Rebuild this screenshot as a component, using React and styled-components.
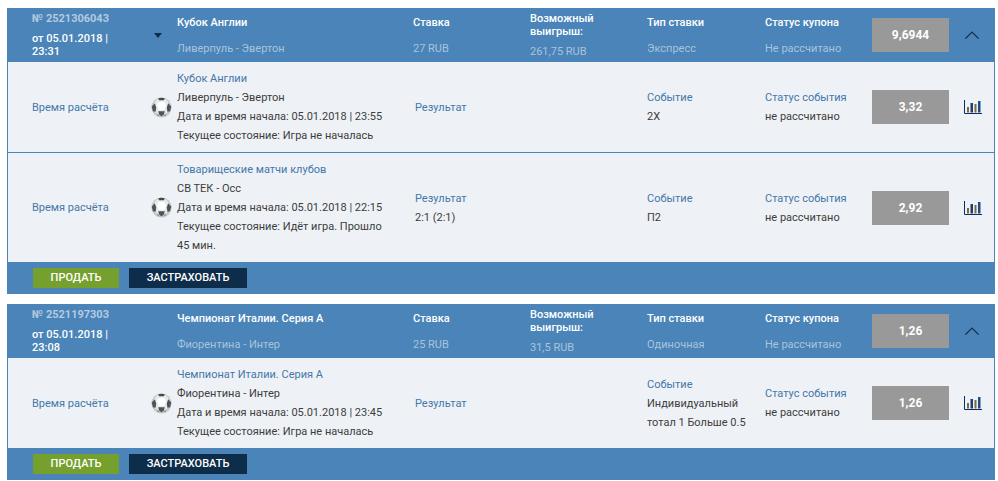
import React from "react";
import styled, { createGlobalStyle } from "styled-components";

const Global = createGlobalStyle`
  html, body { margin: 0; padding: 0; background: #fff; }
  body { font-family: Roboto, "Liberation Sans", sans-serif; font-size: 11px; color: #3d3d3d; }
`;

const Page = styled.div`
  padding: 8px 3px 0 7px;
  display: flex;
  flex-direction: column;
  gap: 10px;
`;

const Card = styled.section`
  background: #4a84b8;
  border: solid #4a84b8;
  border-width: 0 1px;
`;

const columns = "24px 145px 236px 117px 117px 118px 107px 77px 45px";

const Header = styled.header`
  display: grid;
  grid-template-columns: ${columns};
  height: 54px;
  align-items: center;
`;

const Row = styled.div`
  display: grid;
  grid-template-columns: ${columns};
  align-items: center;
  padding: 7px 0;
  background: #eef2f6;
  & + & { border-top: 1px solid #4a84b8; }
`;

const Stack = styled.div`
  display: flex;
  flex-direction: column;
  gap: ${(p) => p.$gap ?? 13}px;
  line-height: 13px;
`;

const Title = styled.div`
  color: #fff;
  font-weight: 500;
`;

const Sub = styled.div`
  color: #a9c3dc;
`;

const NumberCell = styled.div`
  grid-column: 2;
  display: flex;
  align-items: center;
`;

const NumberText = styled(Stack)`
  width: 118px;
`;

const CouponNo = styled.div`
  color: #b4cae0;
  font-weight: 700;
`;

const CouponDate = styled.div`
  max-width: 90px;
  color: #fff;
  font-weight: 500;
`;

const Caret = styled.span`
  width: 0;
  height: 0;
  margin: 1px 0 0 4px;
  border: solid transparent;
  border-width: 5px 4px 0;
  border-top-color: #0d2d4a;
`;

const Odds = styled.div`
  height: 34px;
  display: flex;
  align-items: center;
  justify-content: center;
  background: #999;
  color: #fff;
  font-size: 12px;
  font-weight: 700;
`;

const Toggle = styled.button`
  justify-self: center;
  width: 14px;
  height: 8px;
  display: flex;
  padding: 0;
  border: 0;
  background: none;
`;

const Lines = styled.div`
  line-height: 19px;
`;

const EventLines = styled(Lines)`
  padding-right: 30px;
`;

const ResultLines = styled(Lines)`
  padding-left: 2px;
`;

const Link = styled.div`
  color: #4577a8;
`;

const TimeCell = styled(Link)`
  grid-column: 2;
  display: flex;
  align-items: center;
  justify-content: space-between;
  padding-right: 5px;
`;

const ChartCell = styled.div`
  justify-self: center;
  display: flex;
  padding-left: 2px;
`;

const Footer = styled.footer`
  display: flex;
  gap: 10px;
  padding: 6px 25px;
`;

const Action = styled.button`
  height: 20px;
  width: ${(p) => p.$w}px;
  padding: 0;
  border: 0;
  background: ${(p) => p.$bg};
  color: #fff;
  font: 500 11px/20px Roboto, sans-serif;
  text-transform: uppercase;
`;

const Ball = () => (
  <svg width="21" height="21" viewBox="0 0 22 22" aria-hidden="true">
    <circle cx="11" cy="11" r="10.6" fill="#c3ccca" />
    <circle cx="11" cy="10" r="8.6" fill="#e6eaea" />
    <path d="M7.5 1.4 Q11 0.4 14.5 1.4 L13.5 3.4 L8.5 3.4Z" fill="#414b4a" />
    <path d="M0.8 10 L4 6.5 L5.5 11 L4.8 15.5 L2 15Z" fill="#4b5554" />
    <path d="M21.2 10 L18 6.5 L16.5 11 L17.2 15.5 L20 15Z" fill="#4b5554" />
    <path d="M7.5 15 L14.5 15 L13.5 18 L11 20.5 L8.5 18Z" fill="#4b5554" />
    <path d="M7 17.5 L9 20.5 L6.5 19.5Z M15 17.5 L13 20.5 L15.5 19.5Z" fill="#7d8786" />
    <path d="M8 5 L14 5 L16 9.5 L13.5 13.5 L8.5 13.5 L6 9.5Z" fill="#ffffff" />
  </svg>
);

const Chart = () => (
  <svg width="18" height="14" viewBox="0 0 18 14" aria-hidden="true">
    <path d="M0.5 0 V13.5 H18" fill="none" stroke="#0d2d6a" strokeWidth="1" />
    <rect x="3" y="7" width="2" height="5.5" fill="#7d6a45" />
    <rect x="6.5" y="3" width="2.5" height="9.5" fill="#1d3f6e" />
    <rect x="10.5" y="4" width="2" height="8.5" fill="#7d6a45" />
    <rect x="14" y="1" width="2.5" height="11.5" fill="#1d4f86" />
  </svg>
);

const Chevron = () => (
  <svg width="14" height="8" viewBox="0 0 14 8" aria-hidden="true">
    <path d="M0.5 7.5 L7 1 L13.5 7.5" fill="none" stroke="#17314c" strokeWidth="1.2" />
  </svg>
);

const coupons = [
  {
    no: "№ 2521306043",
    date: "от 05.01.2018 | 23:31",
    caret: true,
    title: "Кубок Англии",
    match: "Ливерпуль - Эвертон",
    stake: "27 RUB",
    win: "261,75 RUB",
    type: "Экспресс",
    odds: "9,6944",
    events: [
      {
        league: "Кубок Англии",
        match: "Ливерпуль - Эвертон",
        start: "05.01.2018 | 23:55",
        state: "Игра не началась",
        score: null,
        bet: ["2Х"],
        odds: "3,32",
      },
      {
        league: "Товарищеские матчи клубов",
        match: "СВ ТЕК - Осс",
        start: "05.01.2018 | 22:15",
        state: "Идёт игра. Прошло 45 мин.",
        score: "2:1 (2:1)",
        bet: ["П2"],
        odds: "2,92",
      },
    ],
  },
  {
    no: "№ 2521197303",
    date: "от 05.01.2018 | 23:08",
    caret: false,
    title: "Чемпионат Италии. Серия А",
    match: "Фиорентина - Интер",
    stake: "25 RUB",
    win: "31,5 RUB",
    type: "Одиночная",
    odds: "1,26",
    events: [
      {
        league: "Чемпионат Италии. Серия А",
        match: "Фиорентина - Интер",
        start: "05.01.2018 | 23:45",
        state: "Игра не началась",
        score: null,
        bet: ["Индивидуальный", "тотал 1 Больше 0.5"],
        odds: "1,26",
      },
    ],
  },
];

const Info = ({ title, value, gap }) => (
  <Stack $gap={gap}>
    <Title>{title}</Title>
    <Sub>{value}</Sub>
  </Stack>
);

export default function App() {
  return (
    <>
      <Global />
      <Page>
        {coupons.map((c) => (
          <Card key={c.no}>
            <Header>
              <NumberCell>
                <NumberText $gap={7}>
                  <CouponNo>{c.no}</CouponNo>
                  <CouponDate>{c.date}</CouponDate>
                </NumberText>
                {c.caret && <Caret />}
              </NumberCell>
              <Info title={c.title} value={c.match} />
              <Info title="Ставка" value={c.stake} />
              <Info title="Возможный выигрыш:" value={c.win} gap={7} />
              <Info title="Тип ставки" value={c.type} />
              <Info title="Статус купона" value="Не рассчитано" />
              <Odds>{c.odds}</Odds>
              <Toggle aria-label="Свернуть">
                <Chevron />
              </Toggle>
            </Header>
            {c.events.map((e) => (
              <Row key={e.league}>
                <TimeCell>
                  Время расчёта
                  <Ball />
                </TimeCell>
                <EventLines>
                  <Link>{e.league}</Link>
                  <div>{e.match}</div>
                  <div>Дата и время начала: {e.start}</div>
                  <div>Текущее состояние: {e.state}</div>
                </EventLines>
                <ResultLines>
                  <Link>Результат</Link>
                  {e.score && <div>{e.score}</div>}
                </ResultLines>
                <div />
                <Lines>
                  <Link>Событие</Link>
                  {e.bet.map((b) => (
                    <div key={b}>{b}</div>
                  ))}
                </Lines>
                <Lines>
                  <Link>Статус события</Link>
                  <div>не рассчитано</div>
                </Lines>
                <Odds>{e.odds}</Odds>
                <ChartCell>
                  <Chart />
                </ChartCell>
              </Row>
            ))}
            <Footer>
              <Action $w={86} $bg="#76a02e">Продать</Action>
              <Action $w={118} $bg="#0d2d4a">Застраховать</Action>
            </Footer>
          </Card>
        ))}
      </Page>
    </>
  );
}
